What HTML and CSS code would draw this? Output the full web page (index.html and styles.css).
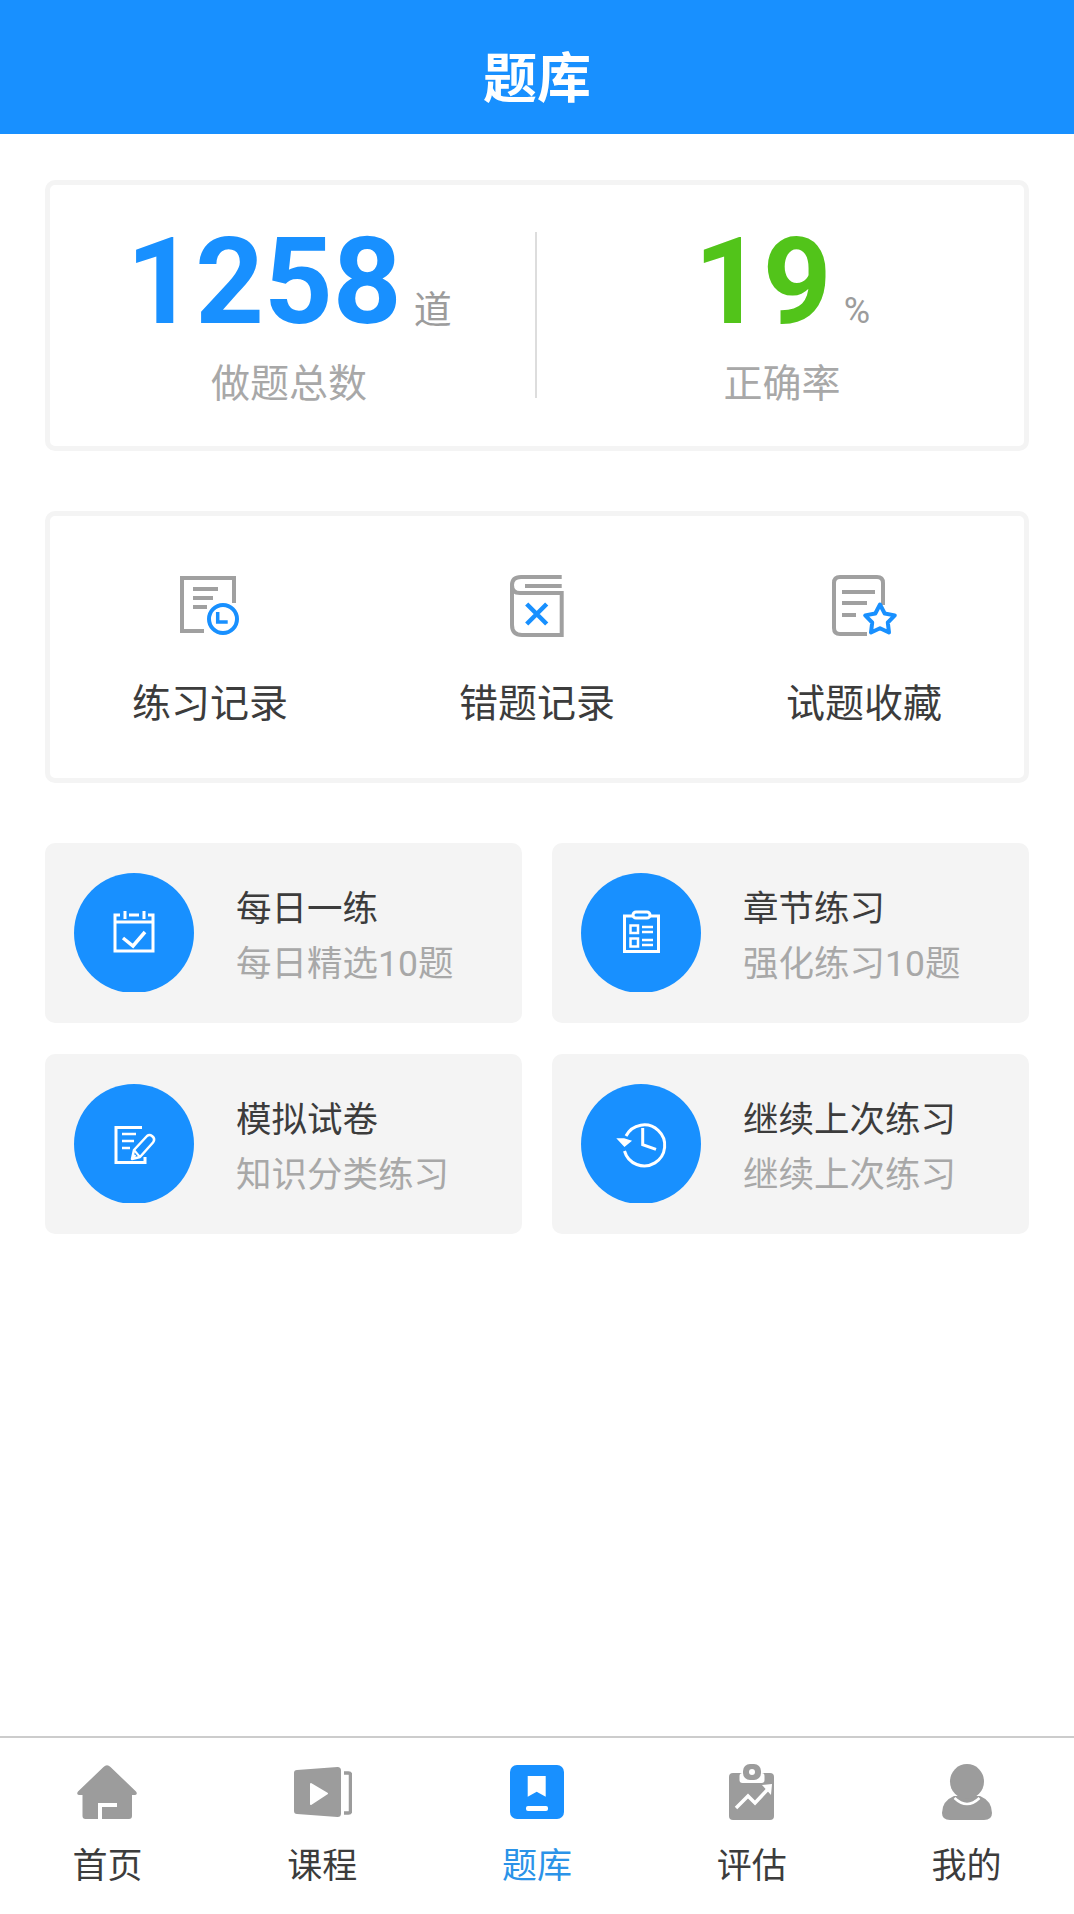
FILE: index.html
```html
<!DOCTYPE html>
<html lang="zh-CN">
<head>
    <meta charset="UTF-8">
    <meta name="viewport" content="width=device-width, initial-scale=1.0">
    <title>题库</title>
    <link rel="stylesheet" href="styles.css">
</head>
<body>
<div class="page">
    <header class="top-bar">题库</header>

    <main class="content">
        <section class="stat-card">
            <div class="stat stat-total">
                <div class="stat-value"><span class="num num-blue">1258</span><span class="unit">道</span></div>
                <div class="stat-label">做题总数</div>
            </div>
            <div class="stat stat-rate">
                <div class="stat-value"><span class="num num-green">19</span><span class="unit unit-pct">%</span></div>
                <div class="stat-label">正确率</div>
            </div>
        </section>

        <section class="record-card">
            <a class="record">
                <svg class="record-icon" viewBox="0 0 70 62" fill="none" stroke="#a0a0a0" stroke-width="4">
                    <path d="M29 56H7V3H59V28"/>
                    <path d="M18 14H43M18 23H38M18 32H32"/>
                    <circle cx="48" cy="44" r="14" stroke="#1890ff"/>
                    <path d="M42.7 37V47H52.7" stroke="#1890ff" stroke-width="3.5"/>
                </svg>
                <span>练习记录</span>
            </a>
            <a class="record">
                <svg class="record-icon" viewBox="0 0 70 62" fill="none" stroke="#a0a0a0" stroke-width="4">
                    <path d="M59.7 2H19Q10 2 10 10V50Q10 60 20 60H59.7V18H18Q10 18 10 10"/>
                    <path d="M23 11H59.7"/>
                    <path d="M24.7 29L44.7 49M44.7 29L24.7 49" stroke="#1890ff" stroke-width="4.5"/>
                </svg>
                <span>错题记录</span>
            </a>
            <a class="record">
                <svg class="record-icon" viewBox="0 0 70 62" fill="none" stroke="#a0a0a0" stroke-width="4">
                    <path d="M38 59H11Q5 59 5 53V8Q5 2 11 2H48Q54 2 54 8V30"/>
                    <path d="M13 17H46M13 28H38M13 40H27"/>
                    <path d="M51 29.500L55.700 38.500L65.800 40.400L58.800 47.500L60 57.500L51 53.200L42 57.500L43.200 47.500L36.200 40.400L46.300 38.500Z" fill="#fff" stroke="#1890ff" stroke-linejoin="round"/>
                </svg>
                <span>试题收藏</span>
            </a>
        </section>

        <section class="tiles">
            <a class="tile">
                <span class="tile-circle">
                    <svg viewBox="0 0 60 60" fill="none" stroke="#fff" stroke-width="3">
                        <path d="M16 12H11V48H49V12H44M25 12H35M11 19H49"/>
                        <path d="M21 8V16M40 8V16"/>
                        <path d="M19 35L29 43L41 29" stroke-width="3.5"/>
                    </svg>
                </span>
                <span class="tile-text">
                    <span class="tile-title">每日一练</span>
                    <span class="tile-sub">每日精选10题</span>
                </span>
            </a>
            <a class="tile">
                <span class="tile-circle">
                    <svg viewBox="0 0 60 60" fill="none" stroke="#fff" stroke-width="3">
                        <path d="M22 13H13.5V48.5H47.5V13H39"/>
                        <rect x="22" y="9" width="17" height="6" rx="3"/>
                        <path d="M19.500 22.500H27V30H19.500ZM19.500 35.500H27V43.500H19.500Z" stroke-width="2.500"/>
                        <path d="M31 24H42M31 29H42M31 37H42M31 42H42" stroke-width="2.500"/>
                    </svg>
                </span>
                <span class="tile-text">
                    <span class="tile-title">章节练习</span>
                    <span class="tile-sub">强化练习10题</span>
                </span>
            </a>
            <a class="tile">
                <span class="tile-circle">
                    <svg viewBox="0 0 60 60" fill="none" stroke="#fff" stroke-width="3">
                        <path d="M38 13.500H12V48.500H41V43"/>
                        <path d="M18 20H32M18 27H30M18 34H26" stroke-width="2.500"/>
                        <path d="M28 45L30 36L43 22Q45.500 20 48 22L49.500 23.500Q51 26 49 28.500L36 43Z" fill="#1890ff" stroke-width="2.500" stroke-linejoin="round"/>
                        <path d="M30 36L36 43M28 45L31.500 41" stroke-width="2"/>
                    </svg>
                </span>
                <span class="tile-text">
                    <span class="tile-title">模拟试卷</span>
                    <span class="tile-sub">知识分类练习</span>
                </span>
            </a>
            <a class="tile">
                <span class="tile-circle">
                    <svg viewBox="0 0 60 60" fill="none" stroke="#fff" stroke-width="3">
                        <path d="M15 22A20.500 20.500 0 1 1 13.500 37"/>
                        <path d="M7 25L13.500 32L19.500 27L13 25Z" fill="#fff" stroke-width="1.500"/>
                        <path d="M31.700 14V30.700L45 35.300"/>
                    </svg>
                </span>
                <span class="tile-text">
                    <span class="tile-title">继续上次练习</span>
                    <span class="tile-sub">继续上次练习</span>
                </span>
            </a>
        </section>
    </main>

    <nav class="tab-bar">
        <a class="tab">
            <svg viewBox="0 0 60 60">
                <path d="M26.500 4Q30 .5 33.500 4L59 28.500Q61 31.500 58 32H55V53Q55 56 52 56H8.500Q5.500 56 5.500 53V32H2Q-1 31.500 1 28.500Z" fill="#9c9c9c"/>
                <path d="M21 56V40H40V44H25V56Z" fill="#fff"/>
            </svg>
            <span>首页</span>
        </a>
        <a class="tab">
            <svg viewBox="0 0 60 60">
                <path d="M5 7L45.500 4Q49 4 49 7.500V50.500Q49 54 45.500 54L5 51Q2 51 2 48V10Q2 7 5 7Z" fill="#9c9c9c"/>
                <path d="M19 21L35 30.500L19 41Z" fill="#fff" stroke="#fff" stroke-width="2" stroke-linejoin="round"/>
                <path d="M52 10H56.500Q58.500 10 58.500 12V48Q58.500 50 56.500 50H52" fill="none" stroke="#9c9c9c" stroke-width="3.500"/>
            </svg>
            <span>课程</span>
        </a>
        <a class="tab tab-active">
            <svg viewBox="0 0 60 60">
                <rect x="3" y="2" width="54" height="54" rx="7" fill="#1890ff"/>
                <path d="M20.700 13H38.700V33.700L29.700 28.700L20.700 33.700Z" fill="#fff"/>
                <rect x="19" y="43" width="22" height="5" rx="2" fill="#fff"/>
            </svg>
            <span>题库</span>
        </a>
        <a class="tab">
            <svg viewBox="0 0 60 60">
                <rect x="7" y="10" width="45" height="47" rx="4" fill="#9c9c9c"/>
                <rect x="17.500" y="10" width="25" height="10" rx="3" fill="#fff"/>
                <rect x="21" y="1" width="18" height="16" rx="7" fill="#9c9c9c"/>
                <circle cx="30" cy="9" r="3" fill="#fff"/>
                <path d="M14 45L26 33L33 40L46 26" fill="none" stroke="#fff" stroke-width="3.500"/>
                <path d="M40 22L50 21L49 32Z" fill="#fff"/>
            </svg>
            <span>评估</span>
        </a>
        <a class="tab">
            <svg viewBox="0 0 60 60">
                <path d="M17 33Q5 38 5 50Q5 57 13 57H47Q55 57 55 50Q55 38 43 33Z" fill="#9c9c9c"/>
                <path d="M17.500 35Q30 47 42.500 35" fill="none" stroke="#fff" stroke-width="2.500"/>
                <ellipse cx="30" cy="18.500" rx="17" ry="17.500" fill="#9c9c9c"/>
                <path d="M20 30Q30 42 40 30Z" fill="#9c9c9c"/>
            </svg>
            <span>我的</span>
        </a>
    </nav>
</div>
</body>
</html>
```

FILE: styles.css
```css
* {
    box-sizing: border-box;
}
body {
    margin: 0;
    font-family: Roboto, "Noto Sans CJK SC", sans-serif;
    color: #3c3c3c;
    background-color: #fff;
}
.page {
    min-height: 100vh;
    display: flex;
    flex-direction: column;
}
.top-bar {
    height: 134px;
    line-height: 159px;
    background-color: #1890ff;
    color: #fff;
    font-size: 54px;
    font-weight: 700;
    text-align: center;
}
.content {
    flex: 1;
    padding: 46px 45px 0;
}

/* stats */
.stat-card {
    display: flex;
    height: 271px;
    padding: 47px 0;
    border: 5px solid #f4f4f4;
    border-radius: 10px;
}
.stat {
    flex: 0 0 50%;
    height: 166px;
    display: flex;
    flex-direction: column;
    align-items: center;
}
.stat-total {
    padding-right: 7px;
    border-right: 2px solid #ddd;
}
.stat-rate {
    padding-left: 3px;
}
.stat-value {
    display: flex;
    align-items: baseline;
    height: 100px;
    line-height: 100px;
}
.num {
    font-size: 120px;
    font-weight: 700;
}
.num-blue {
    color: #1890ff;
}
.num-green {
    color: #52c41a;
}
.unit {
    margin-left: 12px;
    font-size: 38px;
    color: #9c9c9c;
}
.unit-pct {
    font-size: 36px;
}
.stat-label {
    margin-top: 30px;
    font-size: 39px;
    line-height: 44px;
    color: #a8a8a8;
}

/* records */
.record-card {
    display: flex;
    justify-content: space-between;
    height: 272px;
    margin-top: 60px;
    padding: 59px 82px 0;
    border: 5px solid #f4f4f4;
    border-radius: 10px;
}
.record {
    display: flex;
    flex-direction: column;
    align-items: center;
    font-size: 39px;
    line-height: 44px;
}
.record-icon {
    width: 70px;
    height: 62px;
    margin-bottom: 45px;
}

/* tiles */
.tiles {
    display: grid;
    grid-template-columns: 477px 477px;
    grid-auto-rows: 180px;
    gap: 31px 30px;
    margin-top: 60px;
}
.tile {
    display: flex;
    align-items: center;
    gap: 42px;
    padding-left: 29px;
    background-color: #f4f4f4;
    border-radius: 10px;
}
.tile-circle {
    width: 120px;
    height: 120px;
    display: flex;
    align-items: center;
    justify-content: center;
    background-color: #1890ff;
    border-radius: 50%;
    clip-path: inset(0 0 1px 0);
}
.tile-circle svg {
    width: 60px;
    height: 60px;
}
.tile-text {
    display: flex;
    flex-direction: column;
    gap: 13px;
    padding-top: 7px;
}
.tile-title {
    font-size: 35.5px;
    line-height: 42px;
}
.tile-sub {
    font-size: 35.5px;
    line-height: 42px;
    color: #a8a8a8;
}

/* bottom nav */
.tab-bar {
    display: flex;
    height: 178px;
    padding-top: 25px;
    border-top: 2px solid #ccc;
}
.tab {
    flex: 1;
    display: flex;
    flex-direction: column;
    align-items: center;
    font-size: 35px;
    line-height: 42px;
}
.tab svg {
    width: 60px;
    height: 60px;
    margin-bottom: 23px;
}
.tab-active {
    color: #2b93e8;
}
```
